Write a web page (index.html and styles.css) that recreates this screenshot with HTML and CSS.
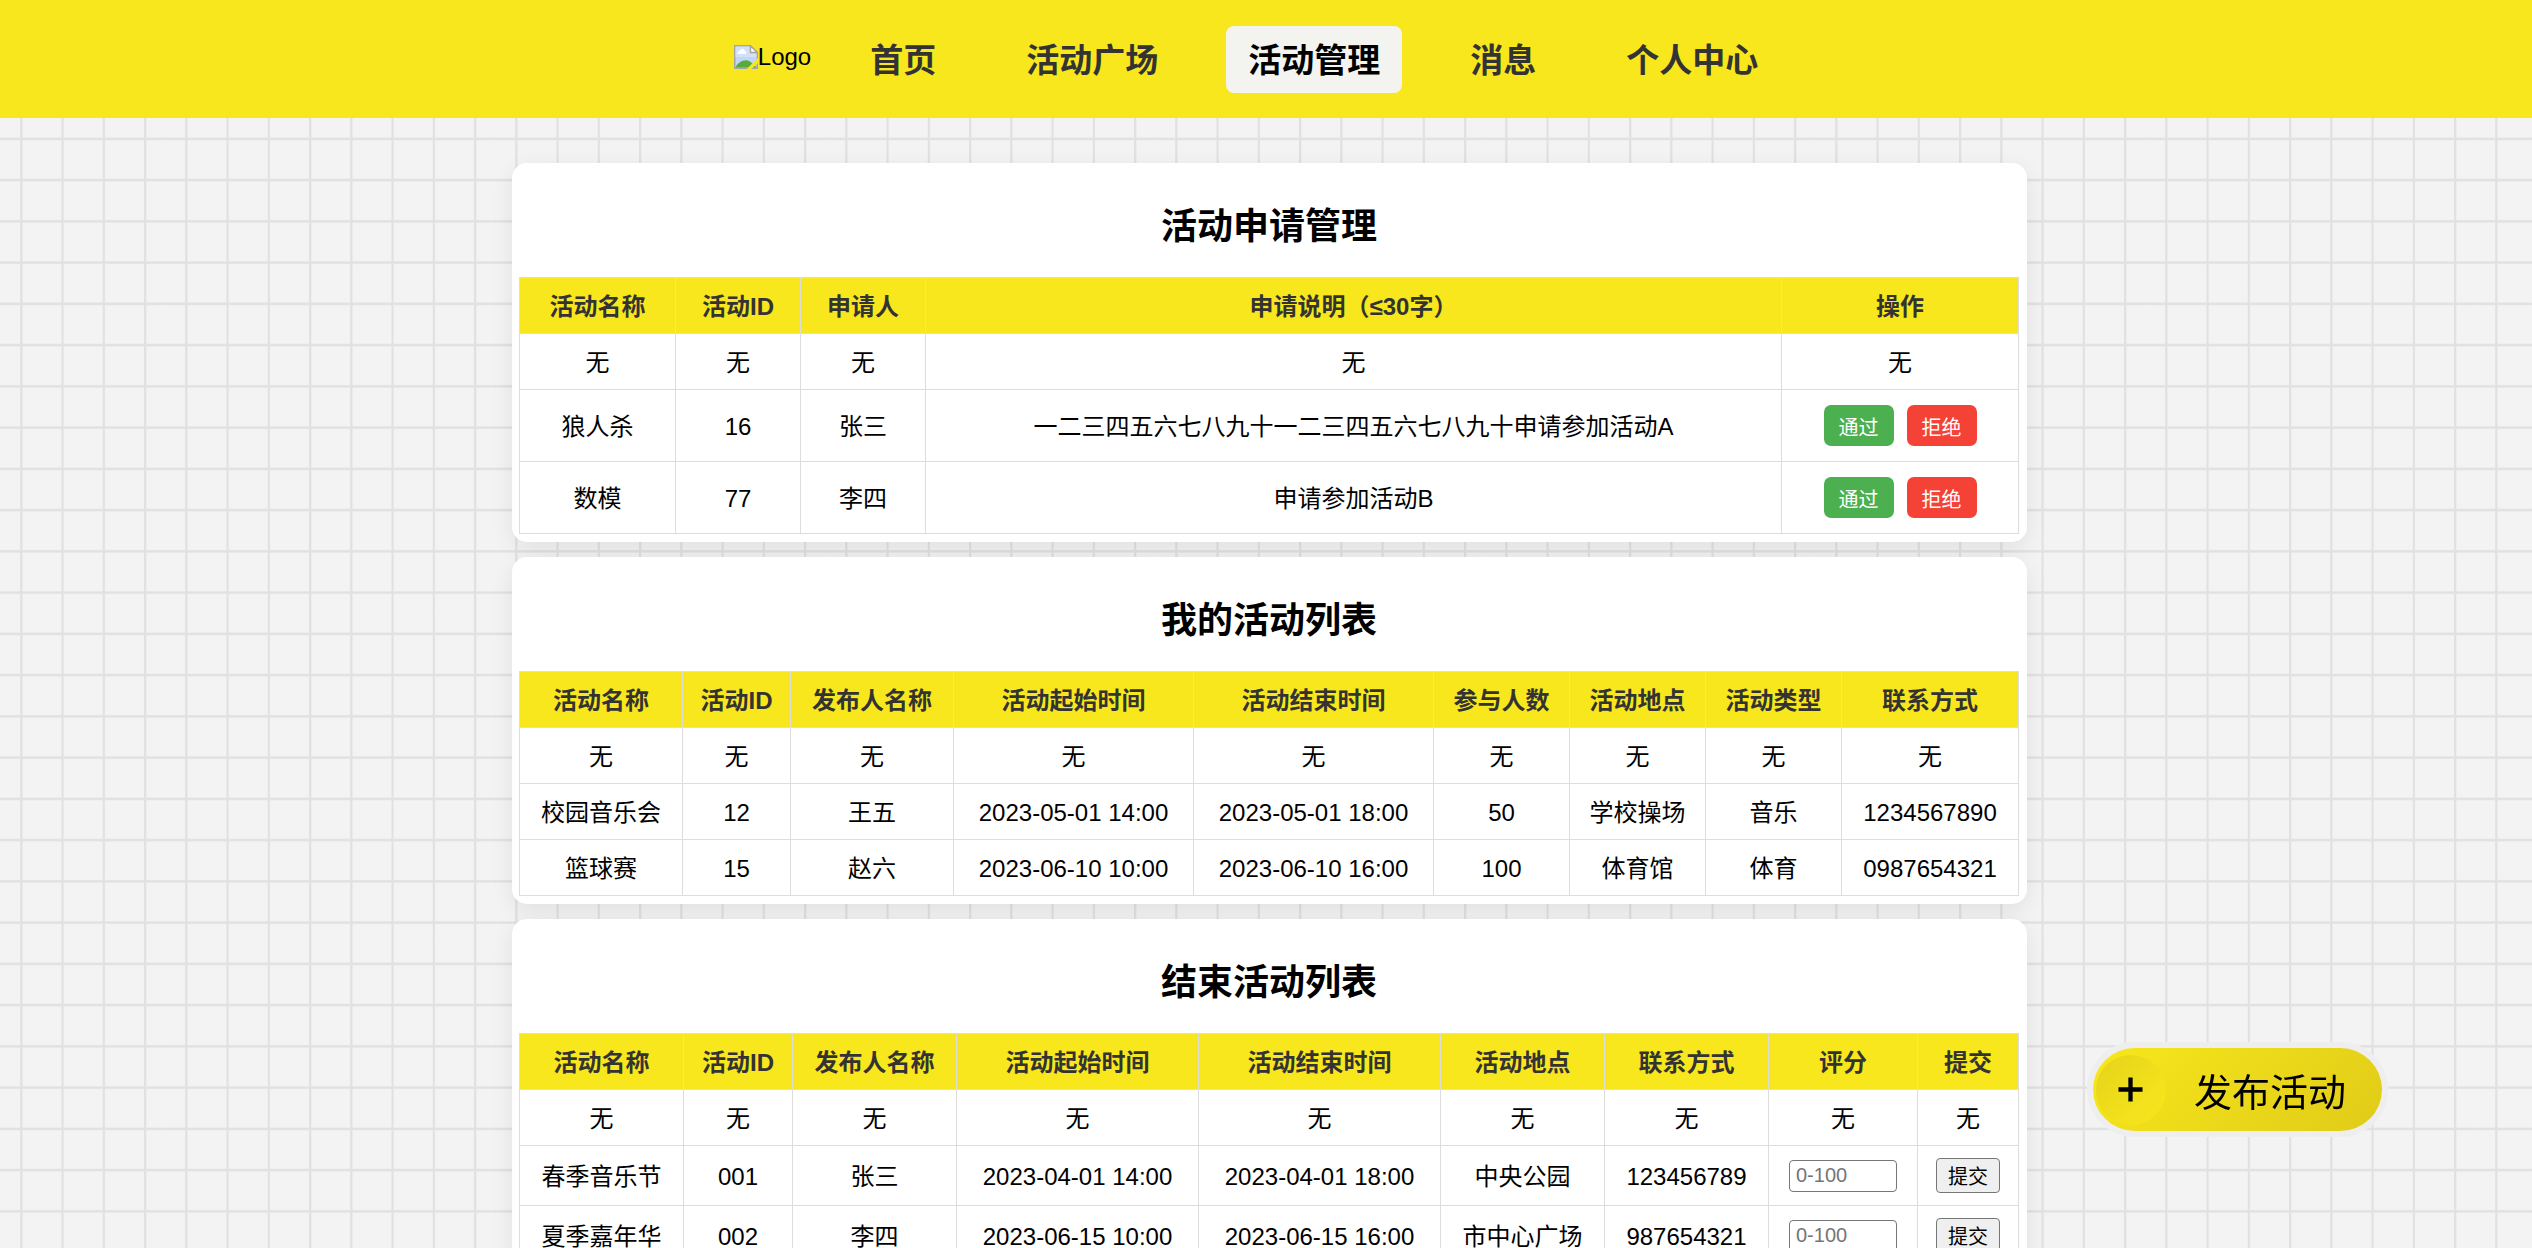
FILE: index.html
```html
<!DOCTYPE html>
<html lang="zh-CN">
<head>
<meta charset="UTF-8">
<meta name="viewport" content="width=device-width, initial-scale=1">
<title>活动管理</title>
<link rel="stylesheet" href="styles.css">
</head>
<body>
<header class="topbar">
  <a class="logo" href="#">
    <svg class="logo-icon" viewBox="0 0 16 16" aria-hidden="true">
      <path d="M0.5 0.5H11L15.5 5V15.5H0.5Z" fill="#c3d5f5" stroke="#a5a5a5"/>
      <path d="M1 1H10.500V5.500H15V8H1Z" fill="#d3e0fa"/>
      <path d="M2.500 6C2 4.500 4 3.800 4.400 3.400C5 2 7 2.500 7.100 4C8.500 4 8.500 6 7.500 6Z" fill="#fff"/>
      <path d="M1 15C2 12.500 5 10.200 8 10.200C10 10.200 13 12.500 15 15Z" fill="#57ab3a"/>
      <path d="M16 8.500L8.500 16H11.500L16 12Z" fill="#f8e71c"/>
      <path d="M11 0.500V5H15.500Z" fill="#fff" stroke="#a5a5a5"/>
    </svg>Logo</a>
  <nav class="menu">
    <a href="#">首页</a>
    <a href="#">活动广场</a>
    <a class="active" href="#" aria-current="page">活动管理</a>
    <a href="#">消息</a>
    <a href="#">个人中心</a>
  </nav>
</header>
<main class="page">
  <section class="card">
    <h2>活动申请管理</h2>
    <table class="requests">
      <thead><tr><th>活动名称</th><th>活动ID</th><th>申请人</th><th>申请说明（≤30字）</th><th>操作</th></tr></thead>
      <tbody>
        <tr><td>无</td><td>无</td><td>无</td><td>无</td><td>无</td></tr>
        <tr class="tall"><td>狼人杀</td><td>16</td><td>张三</td><td>一二三四五六七八九十一二三四五六七八九十申请参加活动A</td><td class="control"><div class="actions"><button class="action approve" type="button">通过</button><button class="action reject" type="button">拒绝</button></div></td></tr>
        <tr class="tall"><td>数模</td><td>77</td><td>李四</td><td>申请参加活动B</td><td class="control"><div class="actions"><button class="action approve" type="button">通过</button><button class="action reject" type="button">拒绝</button></div></td></tr>
      </tbody>
    </table>
  </section>
  <section class="card">
    <h2>我的活动列表</h2>
    <table class="mine">
      <thead><tr><th>活动名称</th><th>活动ID</th><th>发布人名称</th><th>活动起始时间</th><th>活动结束时间</th><th>参与人数</th><th>活动地点</th><th>活动类型</th><th>联系方式</th></tr></thead>
      <tbody>
        <tr><td>无</td><td>无</td><td>无</td><td>无</td><td>无</td><td>无</td><td>无</td><td>无</td><td>无</td></tr>
        <tr><td>校园音乐会</td><td>12</td><td>王五</td><td>2023-05-01 14:00</td><td>2023-05-01 18:00</td><td>50</td><td>学校操场</td><td>音乐</td><td>1234567890</td></tr>
        <tr><td>篮球赛</td><td>15</td><td>赵六</td><td>2023-06-10 10:00</td><td>2023-06-10 16:00</td><td>100</td><td>体育馆</td><td>体育</td><td>0987654321</td></tr>
      </tbody>
    </table>
  </section>
  <section class="card">
    <h2>结束活动列表</h2>
    <table class="finished">
      <thead><tr><th>活动名称</th><th>活动ID</th><th>发布人名称</th><th>活动起始时间</th><th>活动结束时间</th><th>活动地点</th><th>联系方式</th><th>评分</th><th>提交</th></tr></thead>
      <tbody>
        <tr><td>无</td><td>无</td><td>无</td><td>无</td><td>无</td><td>无</td><td>无</td><td>无</td><td>无</td></tr>
        <tr class="rated"><td>春季音乐节</td><td>001</td><td>张三</td><td>2023-04-01 14:00</td><td>2023-04-01 18:00</td><td>中央公园</td><td>123456789</td><td class="control"><input class="score" type="number" min="0" max="100" placeholder="0-100" aria-label="评分"></td><td class="control"><button class="submit" type="button">提交</button></td></tr>
        <tr class="rated"><td>夏季嘉年华</td><td>002</td><td>李四</td><td>2023-06-15 10:00</td><td>2023-06-15 16:00</td><td>市中心广场</td><td>987654321</td><td class="control"><input class="score" type="number" min="0" max="100" placeholder="0-100" aria-label="评分"></td><td class="control"><button class="submit" type="button">提交</button></td></tr>
      </tbody>
    </table>
  </section>
</main>
<button class="publish" type="button">
  <span class="publish-icon"><svg viewBox="0 0 26 26" aria-hidden="true"><path d="M13 0.500V25.500M0.500 13H25.500" stroke="#000" stroke-width="4.500"/></svg></span>
  <span class="publish-label">发布活动</span>
</button>
</body>
</html>
```
FILE: styles.css
```css
* { box-sizing: border-box; }

body {
  margin: 0;
  background: #f3f3f3;
  color: #000;
  font-family: "Liberation Sans", "Noto Sans CJK SC", sans-serif;
  font-size: 24px;
  line-height: 32px;
}

button, input { font-family: inherit; }

.topbar {
  display: flex;
  justify-content: center;
  align-items: center;
  gap: 37px;
  height: 118px;
  padding-right: 18px;
  background: #f8e71c;
}

.logo {
  display: flex;
  align-items: center;
  padding-bottom: 4px;
  color: #000;
  text-decoration: none;
}

.logo-icon { width: 24px; height: 24px; }

.menu { display: flex; gap: 46px; }

.menu a {
  padding: 10px 22px 8px;
  border-radius: 8px;
  color: #333;
  font-size: 33px;
  font-weight: bold;
  line-height: 49px;
  text-decoration: none;
}

.menu .active { background: #f3f3f0; color: #000; }

/* Four grid cells per 165px tile */
.page {
  display: flex;
  flex-direction: column;
  align-items: center;
  gap: 15px;
  padding: 45px 0 45px 7px;
  background-color: #f3f3f3;
  background-image:
    repeating-linear-gradient(180deg, transparent 0%, transparent 11.5%, #e1e1e1 12.3%, #e1e1e1 13%, transparent 13.8%, transparent 25%),
    repeating-linear-gradient(90deg, transparent 0%, transparent 12%, #e1e1e1 12.5%, #e1e1e1 13.2%, transparent 14%, transparent 25%);
  background-size: 165px 165px;
}

.card {
  width: 100%;
  max-width: 1515px;
  padding: 7px 8px 8px 7px;
  border-radius: 15px;
  background: #fff;
  box-shadow: 0 6px 22px rgba(0, 0, 0, 0.08);
}

h2 {
  margin: 33px 0 27px;
  font-size: 36px;
  line-height: 47px;
  text-align: center;
}

table {
  width: 100%;
  border-collapse: collapse;
  table-layout: fixed;
  text-align: center;
}

th, td {
  height: 56px;
  padding: 2px 0 0;
  border: 1px solid #ddd;
}

th { background: #f8e71c; color: #333; }

.tall td { height: 72px; }
.rated td { height: 60px; }
.control { padding: 0; }

.requests th:nth-child(1) { width: 156px; }
.requests th:nth-child(2),
.requests th:nth-child(3) { width: 125px; }
.requests th:nth-child(5) { width: 237px; }

.mine th:nth-child(1),
.mine th:nth-child(3) { width: 163px; }
.mine th:nth-child(2) { width: 108px; }
.mine th:nth-child(4),
.mine th:nth-child(5) { width: 240px; }
.mine th:nth-child(6),
.mine th:nth-child(7),
.mine th:nth-child(8) { width: 136px; }

.finished th:nth-child(1),
.finished th:nth-child(3),
.finished th:nth-child(6),
.finished th:nth-child(7) { width: 164px; }
.finished th:nth-child(2) { width: 109px; }
.finished th:nth-child(4),
.finished th:nth-child(5) { width: 242px; }
.finished th:nth-child(8) { width: 149px; }

.actions { display: flex; justify-content: center; gap: 13px; }

.action {
  width: 70px;
  height: 41px;
  padding: 2px 0 0;
  border: 0;
  border-radius: 7px;
  color: #fff;
  font-size: 20px;
}

.approve { background: #4caf50; }
.reject { background: #f44336; }

.score {
  display: block;
  width: 108px;
  height: 32px;
  margin: 0 auto;
  padding: 0 6px;
  border: 1px solid #767676;
  border-radius: 4px;
  font-size: 20px;
}

.submit {
  display: block;
  width: 64px;
  height: 35px;
  margin: 0 auto;
  padding: 0;
  border: 1px solid #767676;
  border-radius: 4px;
  background: #efefef;
  color: #000;
  font-size: 20px;
}

.publish {
  position: fixed;
  right: 150px;
  bottom: 117px;
  display: flex;
  align-items: center;
  gap: 28px;
  height: 83px;
  padding: 0 36px 0 3px;
  border: 0;
  border-radius: 42px;
  background: linear-gradient(135deg, #f8e71c, #e0cb18);
  box-shadow: 0 0 0 6px #eee;
  color: #000;
  font-size: 38px;
}

.publish-icon {
  display: grid;
  place-items: center;
  width: 70px;
  height: 70px;
  border-radius: 50%;
  background: linear-gradient(135deg, #e4d31a, #f5e41c 80%);
}

.publish-icon svg { width: 25px; height: 25px; }
```
